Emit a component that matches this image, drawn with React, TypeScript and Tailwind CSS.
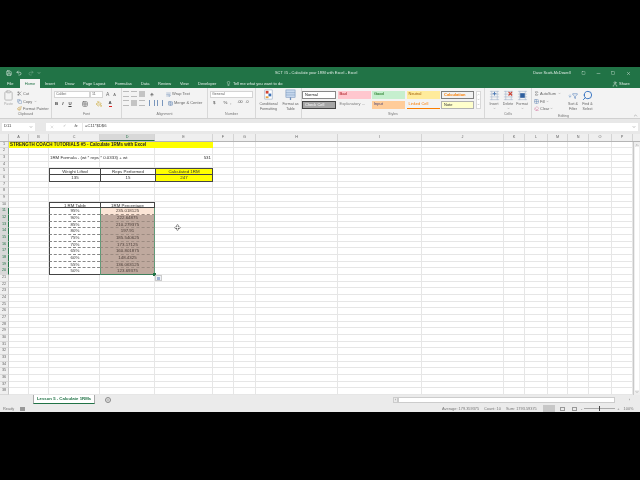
import type { ReactNode } from "react";
import { Redo2, Save, Undo2, Search, Clipboard, Scissors, Copy, Paintbrush, User, Minus, X, Square, Lightbulb, Plus, ChevronDown, ChevronUp, Sigma, Eraser, Grid2x2, PaintBucket, WrapText, TableCellsMerge, ArrowDown, Filter } from "lucide-react";

const cols = [
  { name: "A", w: 20 },
  { name: "B", w: 20 },
  { name: "C", w: 51 },
  { name: "D", w: 55 },
  { name: "E", w: 58 },
  { name: "F", w: 21 },
  { name: "G", w: 22 },
  { name: "H", w: 82 },
  { name: "I", w: 84 },
  { name: "J", w: 82 },
  { name: "K", w: 21 },
  { name: "L", w: 23 },
  { name: "M", w: 20 },
  { name: "N", w: 21 },
  { name: "O", w: 23 },
  { name: "P", w: 21 },
];

const table = [
  ["95%", "235.018125"],
  ["90%", "222.64875"],
  ["85%", "210.279375"],
  ["80%", "197.91"],
  ["75%", "185.540625"],
  ["70%", "173.17125"],
  ["65%", "160.801875"],
  ["60%", "148.4325"],
  ["55%", "136.063125"],
  ["50%", "123.69375"],
];

const styles = [
  ["Bad", "bg-[#ffc7ce] text-[#9c0006]", "Explanatory ...", "text-[#7f7f7f]"],
  ["Good", "bg-[#c6efce] text-[#006100]", "Input", "bg-[#ffcc99] text-[#3f3f76]"],
  ["Neutral", "bg-[#ffeb9c] text-[#9c5700]", "Linked Cell", "text-[#fa7d00] border-b border-[#fa7d00]"],
  ["Calculation", "bg-[#f2f2f2] text-[#fa7d00] font-bold border border-[#7f7f7f]", "Note", "bg-[#ffffcc] text-[#333] border border-[#b2b2b2]"],
];

function Group({ label, w, children }: { label: string; w: number; children: ReactNode }) {
  return (
    <div style={{ width: w }} className="flex h-full shrink-0 flex-col border-r border-[#d8d8d8]">
      <div className="min-h-0 flex-1 overflow-hidden">{children}</div>
      <div className="h-[7px] text-center text-[3.6px] leading-[6px] text-[#777]">{label}</div>
    </div>
  );
}

function CellsIcon({ mark }: { mark: "plus" | "x" | "box" }) {
  return (
    <svg viewBox="0 0 12 12" className="h-[11px] w-[11px]">
      <path d="M1 1.5h10M1 4.5h10M1 7.5h10M1 10.5h10M3 1v10M9 1v10" stroke="#9fb2c9" strokeWidth="0.6" fill="none" />
      {mark === "plus" && <path d="M6 2v4M4 4h4" stroke="#4a78b5" strokeWidth="1" />}
      {mark === "x" && <path d="M6 2l4 4M10 2l-4 4" stroke="#d04030" strokeWidth="1.2" />}
      {mark === "box" && <rect x="3.5" y="3.5" width="5" height="5" fill="#2f5f9e" />}
    </svg>
  );
}

function Sheet() {
  const rows = Array.from({ length: 38 }, (_, i) => i + 1);
  return (
    <div className="flex min-h-0 flex-1">
      <div className="min-w-0 flex-1 overflow-hidden">
        {rows.map((r) => {
          const sel = r >= 11 && r <= 20;
          // rows are 6.67px in the picture, so share them out as whole pixels
          const h = Math.floor((r * 20) / 3) - Math.floor(((r - 1) * 20) / 3);
          return (
            <div key={r} style={{ height: h }} className="flex">
              <div className={`flex w-[9px] shrink-0 items-center justify-center border-b border-[#d8d8d8] text-[3.8px] leading-none ${sel ? "border-r border-r-[#217346] bg-[#d8d8d8] text-[#217346]" : "border-r border-r-[#c8c8c8] bg-[#efefef] text-[#666]"}`}>
                {r}
              </div>
              {cols.map((c) => (
                <Cell key={c.name} col={c.name} row={r} w={c.w} />
              ))}
            </div>
          );
        })}
      </div>
      <div className="flex w-[7px] shrink-0 flex-col items-center justify-between border-l border-[#c8c8c8] bg-[#eeeeee] py-[1px]">
        <ChevronUp className="h-[4px] w-[4px] text-[#555]" />
        <div className="min-h-0 w-[4px] flex-1 bg-white" />
        <ChevronDown className="h-[4px] w-[4px] text-[#555]" />
      </div>
    </div>
  );
}

function Cell({ col, row, w }: { col: string; row: number; w: number }) {
  let cls = "border-r border-b border-[#e6e6e6] text-[#333]";
  let text = "";
  let align = "text-center";

  if (row === 1 && "ABCDE".includes(col)) {
    cls = "bg-[#ffff00] text-[#111] font-bold";
  }
  if (row === 3 && col === "C") {
    text = "1RM Formula - (wt * reps * 0.0333) + wt";
    align = "text-left pl-[1px]";
  }
  if (row === 3 && col === "E") {
    text = "531";
    align = "text-right pr-[1px]";
  }
  if ((row === 5 || row === 6) && "CDE".includes(col)) {
    const vals: Record<string, string[]> = {
      C: ["Weight Lifted", "135"],
      D: ["Reps Performed", "15"],
      E: ["Calculated 1RM", "247"],
    };
    text = vals[col][row - 5];
    cls = `border-l border-b border-[#444] text-[#333] ${col === "E" ? "border-r bg-[#ffff00]" : "bg-white"} ${row === 5 ? "border-t" : ""}`;
  }
  if (row === 10 && "CD".includes(col)) {
    text = col === "C" ? "1 RM Table" : "1RM Percentage";
    cls = `border-t border-l border-b border-[#444] bg-white text-[#333] ${col === "D" ? "border-r" : ""}`;
  }
  if (row >= 11 && row <= 20 && col === "C") {
    text = table[row - 11][0];
    cls = `border-l border-l-[#444] border-b bg-white text-[#333] ${row === 20 ? "border-b-[#444]" : "border-b-[#888] [border-bottom-style:dashed]"}`;
  }
  if (row >= 11 && row <= 20 && col === "D") {
    text = table[row - 11][1];
    cls = `border-x border-x-[#5f9a78] border-b text-[#4a3d37] ${row === 20 ? "border-b-[#3f7f5c]" : "border-b-[#9c8b81] [border-bottom-style:dashed]"} ${row === 11 ? "bg-[#fbe5d6]" : "bg-[#bfa99e]"}`;
  }

  return (
    <div style={{ width: w }} className={`relative shrink-0 whitespace-nowrap text-[4.4px] leading-[5px] ${cls} ${align}`}>
      {text}
      {row === 1 && col === "A" && (
        <span className="absolute top-0 left-[1px] z-10 text-[4.5px] leading-[6px] text-[#222]">STRENGTH COACH TUTORIALS #5 - Calculate 1RMs with Excel</span>
      )}
      {row === 20 && col === "D" && (
        <>
          <div className="absolute right-[-2px] bottom-[-2px] z-10 h-[3px] w-[3px] bg-[#217346]" />
          <div className="absolute top-[7px] right-[-8px] z-10 flex h-[6px] w-[7px] items-center justify-center border border-[#cccccc] bg-[#eef1f6]">
            <div className="h-[3px] w-[3px] bg-[#9db2d4]" />
          </div>
        </>
      )}
      {row === 13 && col === "E" && (
        <>
          <Plus className="absolute top-[2px] left-[19px] z-10 h-[7px] w-[7px] text-[#222]" strokeWidth={6} />
          <Plus className="absolute top-[2px] left-[19px] z-10 h-[7px] w-[7px] text-white" strokeWidth={3} />
        </>
      )}
    </div>
  );
}

export default function App() {
  return (
    <div className="flex h-[480px] w-[640px] flex-col overflow-hidden bg-black font-['Liberation_Sans',sans-serif]">
      <div className="h-[67px] shrink-0 bg-black" />
      <div className="flex h-[345px] shrink-0 flex-col bg-white blur-[0.3px]">
        {/* Title bar */}
        <div className="flex h-[12px] shrink-0 items-center bg-[#217346] pl-[6px] text-white">
          <Save className="h-[6px] w-[6px]" />
          <Undo2 className="ml-[4px] h-[6px] w-[6px]" />
          <Redo2 className="ml-[6px] h-[6px] w-[6px] opacity-40" />
          <ChevronDown className="ml-[3px] h-[4px] w-[4px]" />
          <div className="ml-[234px] text-[3.9px] whitespace-nowrap text-[#dfece5]">SCT #5 - Calculate your 1RM with Excel - Excel</div>
          <span className="ml-[176px] text-[3.9px] whitespace-nowrap text-[#dfece5]">Dave Scott-McDowell</span>
          <Square className="ml-[10px] h-[4px] w-[5px] text-[#dfece5]" />
          <Minus className="ml-[10px] h-[5px] w-[5px] text-[#dfece5]" />
          <Square className="ml-[10px] h-[4px] w-[4px] text-[#dfece5]" />
          <X className="ml-[11px] h-[5px] w-[5px] text-[#dfece5]" />
        </div>

        {/* Tabs */}
        <div className="flex h-[9px] shrink-0 items-center bg-[#217346] pl-[7px] text-[4px] whitespace-nowrap text-[#e4efe9]">
          <span className="w-[13px]">File</span>
          <span className="mr-[5px] flex h-full w-[20px] items-center justify-center bg-[#f3f3f3] text-[#217346]">Home</span>
          <span className="w-[20px]">Insert</span>
          <span className="w-[18px]">Draw</span>
          <span className="w-[32px]">Page Layout</span>
          <span className="w-[26px]">Formulas</span>
          <span className="w-[17px]">Data</span>
          <span className="w-[22px]">Review</span>
          <span className="w-[18px]">View</span>
          <span className="w-[28px]">Developer</span>
          <Lightbulb className="h-[5px] w-[5px]" />
          <span className="ml-[2px] w-[390px]">Tell me what you want to do</span>
          <User className="ml-[-11px] h-[6px] w-[6px]" />
          <span className="ml-[1px]">Share</span>
        </div>

        {/* Ribbon */}
        <div className="flex h-[31px] shrink-0 border-b border-[#d0d0d0] bg-[#f3f3f3] text-[4px] text-[#666]">
          <Group label="Clipboard" w={52}>
            <div className="flex pt-[2px] pl-[2px]">
              <div className="flex w-[13px] flex-col items-center text-[#aaa]">
                <Clipboard className="h-[11px] w-[11px] text-[#b8b8b8]" />
                <span className="mt-[1px] text-[3.6px]">Paste</span>
              </div>
              <div className="ml-[2px] flex flex-col text-[3.9px] leading-[7.5px] whitespace-nowrap">
                <div className="flex items-center gap-[1px]"><Scissors className="h-[5px] w-[5px]" />Cut</div>
                <div className="flex items-center gap-[1px]"><Copy className="h-[5px] w-[5px] text-[#5b7fb0]" />Copy<ChevronDown className="ml-[1px] h-[3px] w-[3px]" /></div>
                <div className="flex items-center gap-[1px]"><Paintbrush className="h-[5px] w-[5px] text-[#c8962e]" />Format Painter</div>
              </div>
            </div>
          </Group>
          <Group label="Font" w={70}>
            <div className="flex flex-col gap-[3px] pt-[3px] pl-[2px]">
              <div className="flex items-center">
                <div className="h-[7px] w-[36px] border border-[#d4d4d4] bg-white pl-[1px] text-[3.6px] leading-[5px]">Calibri</div>
                <div className="h-[7px] w-[13px] border border-[#d4d4d4] bg-white pl-[1px] text-[3.6px] leading-[5px]">11</div>
                <span className="ml-[3px] text-[5px] leading-none">A</span>
                <span className="ml-[4px] text-[4px] leading-none">A</span>
              </div>
              <div className="flex items-center text-[4.4px] leading-none font-bold text-[#444]">
                <span className="ml-[1px]">B</span>
                <span className="ml-[4px] italic">I</span>
                <span className="ml-[5px] underline">U</span>
                <Grid2x2 className="ml-[10px] h-[6px] w-[6px]" />
                <PaintBucket className="ml-[8px] h-[6px] w-[6px] text-[#c9a227]" />
                <span className="ml-[7px] border-b border-[#e02020]">A</span>
              </div>
            </div>
          </Group>
          <Group label="Alignment" w={86}>
            <div className="flex flex-col gap-[3px] pt-[3px] pl-[1px] whitespace-nowrap">
              <div className="flex items-center gap-[2px]">
                <div className="h-[6px] w-[6px] border-y border-[#bbb]" />
                <div className="h-[6px] w-[6px] border-y border-[#bbb]" />
                <div className="h-[6px] w-[6px] bg-[#c4c4c4]" />
                <span className="ml-[3px] w-[14px] text-[5px] leading-none text-[#777]">◈</span>
                <WrapText className="h-[5px] w-[5px] text-[#5b7fb0]" />
                <span className="ml-[-1px]">Wrap Text</span>
              </div>
              <div className="flex items-center gap-[2px]">
                <div className="h-[6px] w-[6px] border-y border-[#bbb]" />
                <div className="h-[6px] w-[6px] bg-[#c4c4c4]" />
                <div className="h-[6px] w-[6px] border-y border-[#bbb]" />
                <div className="ml-[2px] h-[6px] w-[6px] border-x border-[#7a97bd]" />
                <div className="mr-[3px] h-[6px] w-[6px] border-x border-[#7a97bd]" />
                <TableCellsMerge className="h-[5px] w-[5px] text-[#5b7fb0]" />
                <span className="ml-[-1px]">Merge &amp; Center</span>
              </div>
            </div>
          </Group>
          <Group label="Number" w={48}>
            <div className="flex flex-col gap-[3px] pt-[3px] pl-[2px]">
              <div className="h-[7px] w-[43px] border border-[#d4d4d4] bg-white pl-[1px] text-[3.6px] leading-[5px]">General</div>
              <div className="flex text-[4.4px] leading-none text-[#444]">
                <span className="ml-[3px]">$</span>
                <span className="ml-[8px]">%</span>
                <span className="ml-[3px]">,</span>
                <span className="ml-[6px] text-[3.6px]">.00</span>
                <span className="ml-[3px] text-[3.6px]">.0</span>
              </div>
            </div>
          </Group>
          <Group label="" w={46}>
            <div className="flex pt-[1px] pl-[2px] text-center text-[3.6px] leading-[5px] whitespace-nowrap">
              <div className="flex w-[21px] flex-col items-center">
                <svg viewBox="0 0 12 12" className="mb-[2px] h-[11px] w-[11px]">
                  <rect x="2" y="1" width="8" height="10" fill="#fff" stroke="#8aa0bd" strokeWidth="0.6" />
                  <rect x="3" y="2" width="3" height="3" fill="#d04030" />
                  <rect x="6" y="5" width="3" height="3" fill="#3a6fb5" />
                  <rect x="3" y="8" width="3" height="2" fill="#e6a23c" />
                </svg>
                <span>Conditional</span>
                <span>Formatting</span>
              </div>
              <div className="ml-[2px] flex w-[19px] flex-col items-center">
                <svg viewBox="0 0 12 12" className="mb-[2px] h-[11px] w-[11px]">
                  <rect x="1" y="1" width="10" height="8" fill="#c9daee" stroke="#6f8fb8" strokeWidth="0.6" />
                  <path d="M6 9v3" stroke="#6f8fb8" strokeWidth="1.4" />
                  <path d="M1 4h10M1 6.5h10" stroke="#6f8fb8" strokeWidth="0.5" />
                </svg>
                <span>Format as</span>
                <span>Table</span>
              </div>
            </div>
          </Group>
          <div className="flex h-full w-[183px] shrink-0 flex-col border-r border-[#d8d8d8]">
            <div className="flex flex-1 gap-[1.5px] pt-[3px] text-[4px]">
              <div className="flex w-[34px] flex-col gap-[2px]">
                <div className="h-[8px] border border-[#888] bg-white pl-[2px] leading-[6px] text-[#222]">Normal</div>
                <div className="h-[8px] border border-[#444] bg-[#a5a5a5] pl-[2px] leading-[6px] text-white">Check Cell</div>
              </div>
              {styles.map((s) => (
                <div key={s[0]} className="flex w-[33px] flex-col gap-[2.5px]">
                  <div className={`h-[7.5px] pl-[2px] leading-[6.5px] whitespace-nowrap ${s[1]}`}>{s[0]}</div>
                  <div className={`h-[7.5px] pl-[2px] leading-[6.5px] whitespace-nowrap ${s[3]}`}>{s[2]}</div>
                </div>
              ))}
              <div className="flex h-[18px] w-[5px] flex-col border border-[#d8d8d8] bg-white text-[#555]">
                <ChevronUp className="h-[5px] w-[3px]" />
                <ChevronDown className="h-[5px] w-[3px]" />
                <ChevronDown className="h-[5px] w-[3px]" />
              </div>
            </div>
            <div className="h-[7px] text-center text-[3.6px] leading-[6px] text-[#777]">Styles</div>
          </div>
          <Group label="Cells" w={47}>
            <div className="flex pt-[2px] pl-[2px] text-center text-[3.6px] leading-[5px]">
              <div className="flex w-[14px] flex-col items-center"><CellsIcon mark="plus" /><span className="mt-[1px]">Insert</span><ChevronDown className="h-[3px] w-[3px]" /></div>
              <div className="flex w-[14px] flex-col items-center"><CellsIcon mark="x" /><span className="mt-[1px]">Delete</span><ChevronDown className="h-[3px] w-[3px]" /></div>
              <div className="flex w-[14px] flex-col items-center"><CellsIcon mark="box" /><span className="mt-[1px]">Format</span><ChevronDown className="h-[3px] w-[3px]" /></div>
            </div>
          </Group>
          <div className="flex h-full flex-1 flex-col">
            <div className="flex flex-1 pt-[2px] pl-[2px] text-[3.9px] leading-[7.5px] whitespace-nowrap">
              <div className="flex w-[32px] flex-col">
                <div className="flex items-center gap-[1px]"><Sigma className="h-[5px] w-[5px] text-[#444]" />AutoSum<ChevronDown className="ml-[1px] h-[3px] w-[3px]" /></div>
                <div className="flex items-center gap-[1px]"><Grid2x2 className="h-[5px] w-[5px] text-[#5b7fb0]" />Fill<ChevronDown className="h-[3px] w-[3px]" /></div>
                <div className="flex items-center gap-[1px]"><Eraser className="h-[5px] w-[5px] text-[#d46a9a]" />Clear<ChevronDown className="h-[3px] w-[3px]" /></div>
              </div>
              <div className="flex w-[14px] flex-col items-center text-center text-[3.6px] leading-[5px]">
                <div className="flex h-[11px] items-center text-[#3a6fb5]"><ArrowDown className="h-[8px] w-[4px]" /><Filter className="h-[6px] w-[6px]" /></div>
                <span className="mt-[1px]">Sort &amp;</span>
                <span>Filter</span>
              </div>
              <div className="flex w-[15px] flex-col items-center text-center text-[3.6px] leading-[5px]">
                <Search className="h-[11px] w-[11px] scale-x-[-1] text-[#2f6fc0]" />
                <span className="mt-[1px]">Find &amp;</span>
                <span>Select</span>
              </div>
            </div>
            <div className="flex h-[7px] text-[3.6px] leading-[6px] text-[#777]">
              <span className="ml-[26px]">Editing</span>
              <ChevronUp className="mr-[2px] ml-auto h-[5px] w-[5px]" />
            </div>
          </div>
        </div>

        {/* Formula bar */}
        <div className="flex h-[15px] shrink-0 items-center bg-[#e8e8e8] pl-[2px] text-[4.2px] text-[#444]">
          <div className="flex h-[8px] w-[33px] items-center justify-between bg-white px-[2px]">
            D11
            <ChevronDown className="h-[4px] w-[4px]" />
          </div>
          <div className="ml-[11px] flex h-[8px] w-[36px] items-center justify-around bg-white text-[#aaa]">
            <X className="h-[4px] w-[4px]" />
            <span>✓</span>
            <span className="text-[#444] italic">fx</span>
          </div>
          <div className="mr-[2px] ml-[1px] flex h-[8px] flex-1 items-center justify-between bg-white px-[2px]">
            =C11*$D$6
            <ChevronDown className="h-[4px] w-[4px]" />
          </div>
        </div>

        {/* Column headers */}
        <div className="flex h-[8px] shrink-0 border-b border-[#b5b5b5] bg-[#efefef] text-[3.8px] leading-[6px] text-[#666]">
          <div className="w-[9px] shrink-0 border-r border-[#d0d0d0]" />
          {cols.map((c) => (
            <div
              key={c.name}
              style={{ width: c.w }}
              className={`shrink-0 border-r border-[#d4d4d4] text-center ${c.name === "D" ? "border-b border-b-[#217346] bg-[#d8d8d8] text-[#217346]" : ""}`}
            >
              {c.name}
            </div>
          ))}
          <div className="flex-1" />
        </div>

        <Sheet />

        {/* Sheet tabs */}
        <div className="flex h-[10px] shrink-0 items-center bg-[#ebebeb] text-[4.3px] whitespace-nowrap">
          <div className="ml-[33px] flex h-[9px] w-[62px] items-center justify-center self-start border-x border-b border-x-[#aaa] border-b-[#217346] bg-white font-bold text-[#217346]">
            Lesson 5 - Calculate 1RMs
          </div>
          <div className="ml-[10px] flex h-[6px] w-[6px] items-center justify-center rounded-full border border-[#888]">
            <Plus className="h-[4px] w-[4px] text-[#666]" />
          </div>
          <div className="ml-[282px] flex h-[6px] w-[5px] items-center justify-center border border-[#ccc] text-[3px] text-[#555]">‹</div>
          <div className="h-[6px] w-[217px] border border-[#ccc] bg-white" />
          <div className="flex-1 pr-[10px] text-right text-[3px] leading-none text-[#555]">›</div>
        </div>

        {/* Status bar */}
        <div className="flex h-[7px] shrink-0 items-center bg-[#ebebeb] pl-[3px] text-[3.9px] leading-none whitespace-nowrap text-[#777]">
          <span className="w-[17px]">Ready</span>
          <div className="h-[4px] w-[5px] bg-[#999]" />
          <span className="ml-[417px] w-[42px]">Average: 179.359375</span>
          <span className="w-[22px]">Count: 10</span>
          <span className="w-[37px]">Sum: 1793.59375</span>
          <div className="h-full w-[12px] bg-[#c8c8c8]" />
          <div className="ml-[5px] h-[4px] w-[5px] border border-[#999]" />
          <div className="ml-[7px] h-[4px] w-[5px] border border-[#999]" />
          <span className="ml-[4px]">-</span>
          <div className="relative ml-[2px] h-[1px] w-[31px] bg-[#aaa]">
            <div className="absolute top-[-2px] left-[15px] h-[5px] w-[1px] bg-[#444]" />
          </div>
          <span className="ml-[2px]">+</span>
          <span className="ml-[4px]">100%</span>
        </div>
      </div>
      <div className="flex-1 bg-black" />
    </div>
  );
}
